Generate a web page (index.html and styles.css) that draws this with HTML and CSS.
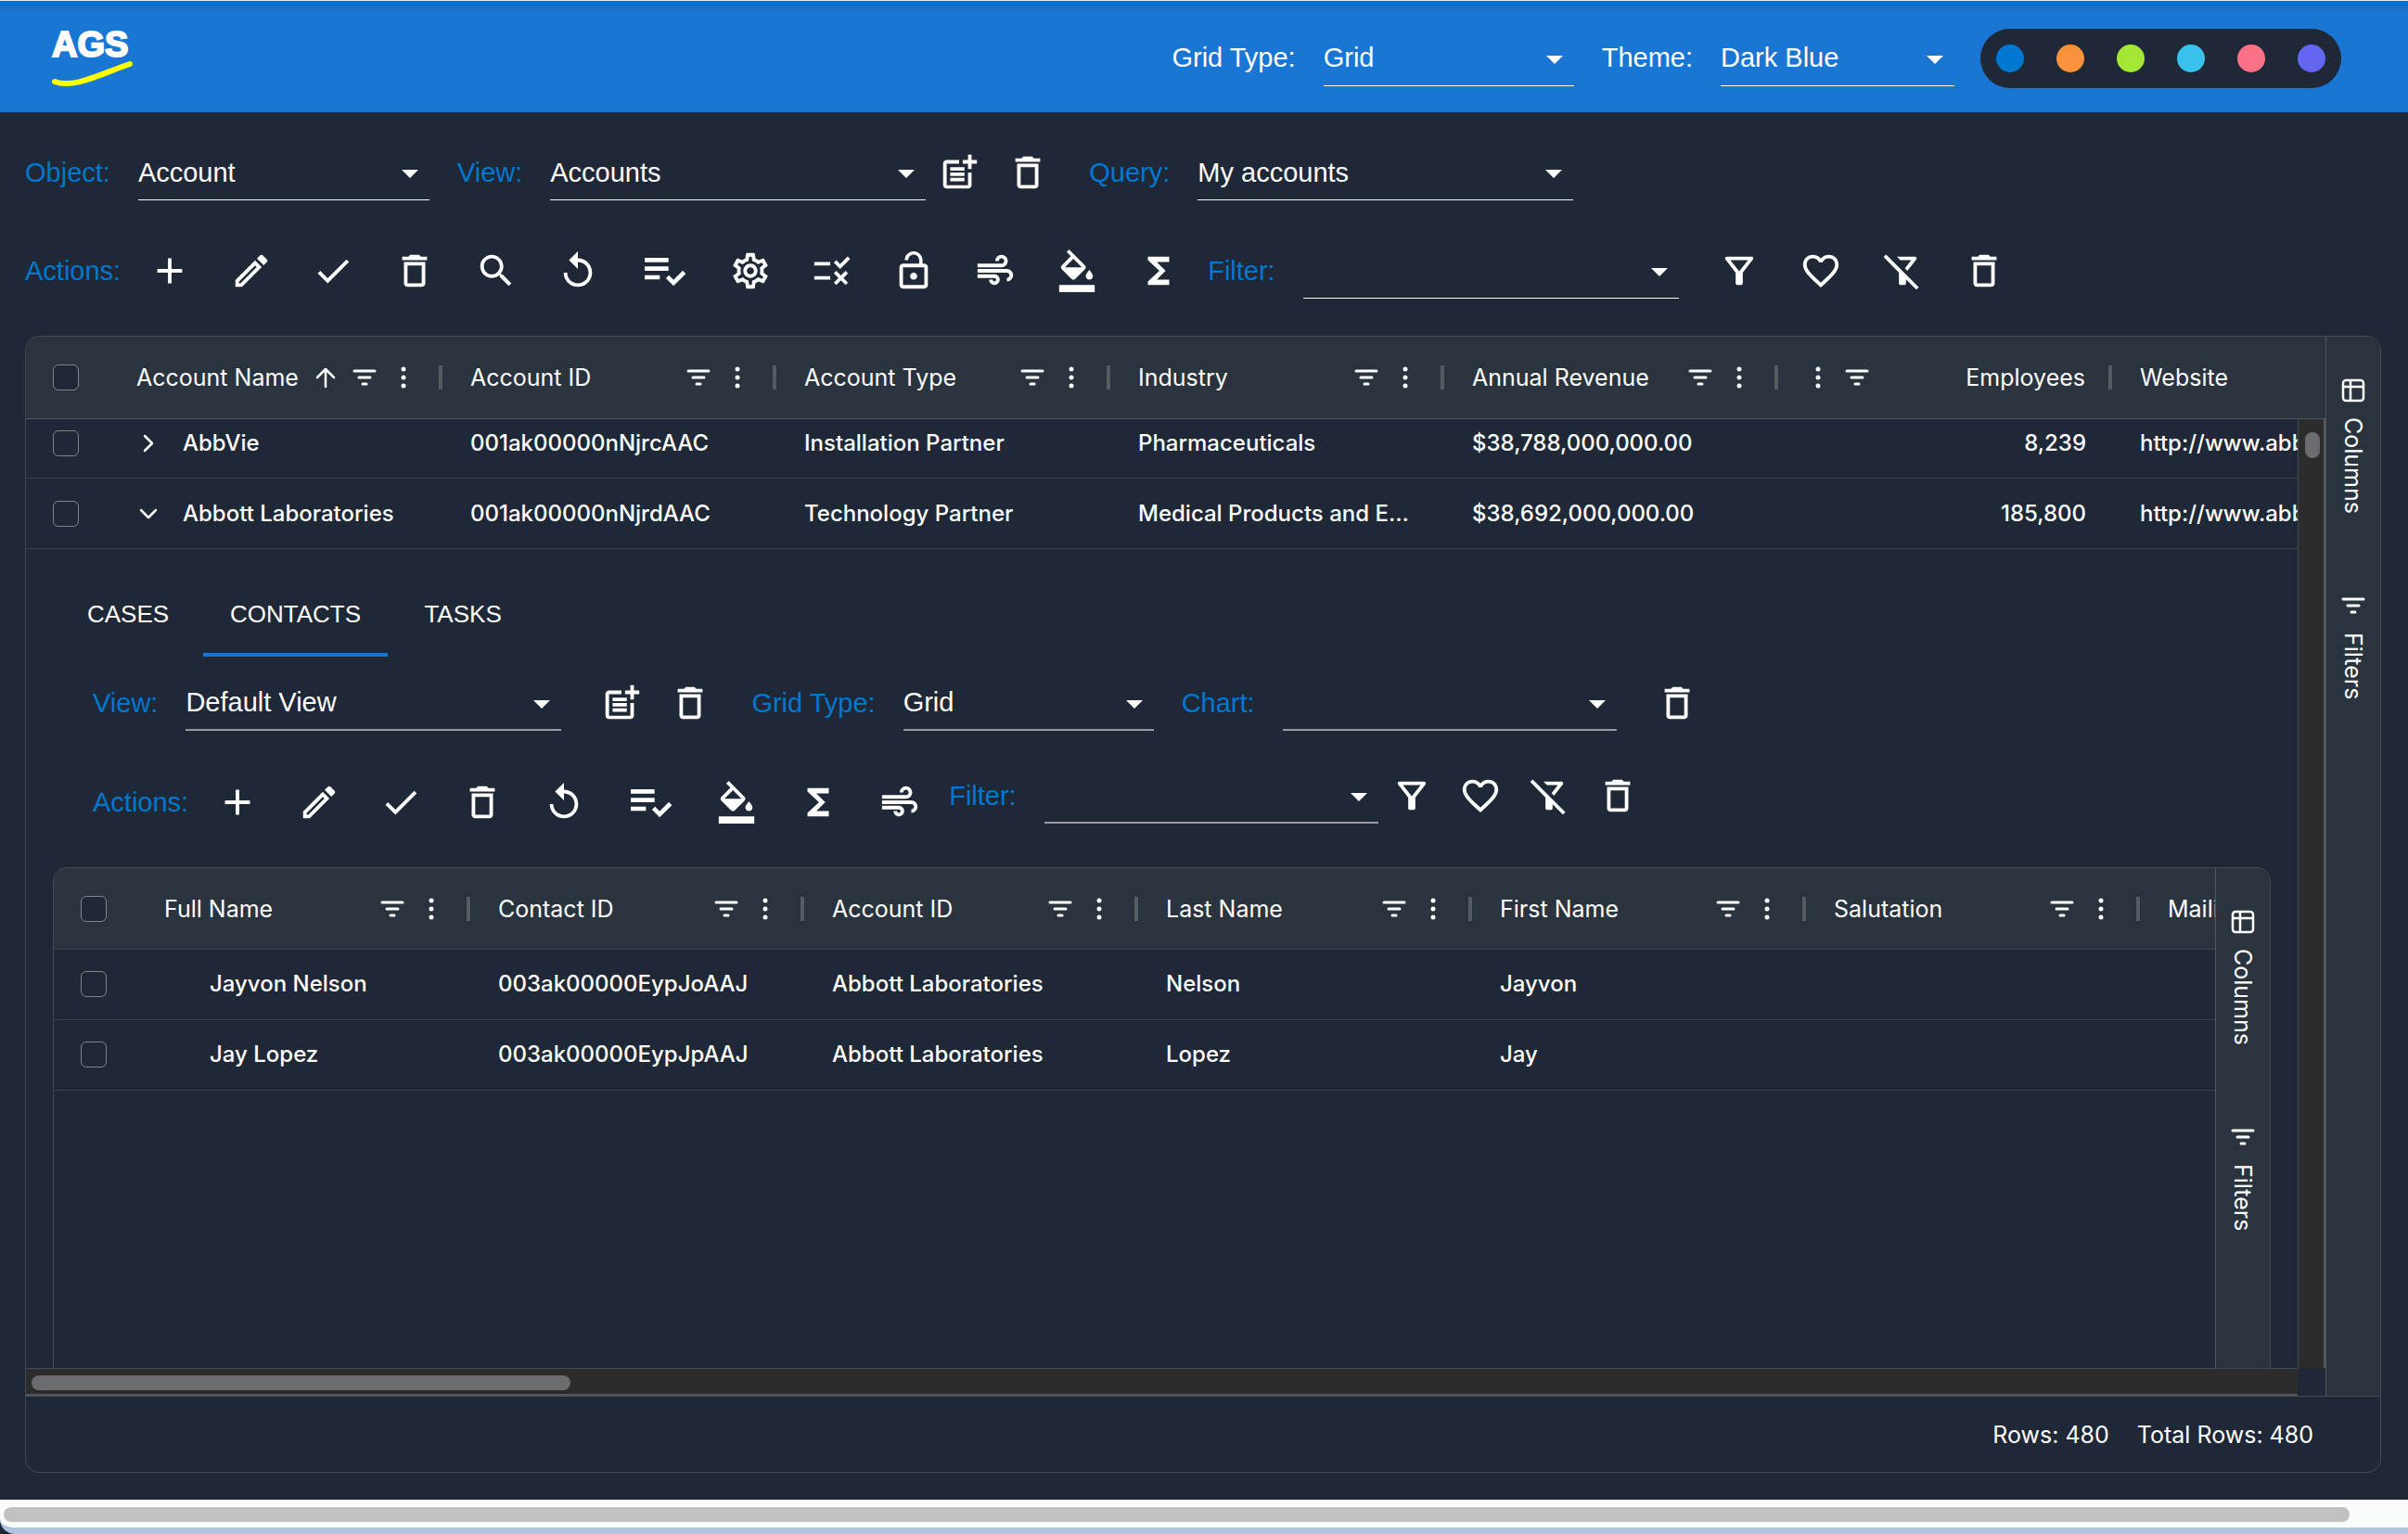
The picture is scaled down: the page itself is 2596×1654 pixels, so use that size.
FILE: index.html
```html
<!DOCTYPE html>
<html lang="en">
  <head>
    <meta charset="UTF-8" />
    <meta name="viewport" content="width=device-width, initial-scale=1.0" />
    <title>AGS - Accounts</title>
    <link rel="stylesheet" href="styles.css">
  </head>
  <body>
    <!-- icon set -->
    <svg class="sprite" aria-hidden="true">
      <symbol id="i-add" viewBox="0 0 24 24"><path d="M19 13h-6v6h-2v-6H5v-2h6V5h2v6h6z"/></symbol>
      <symbol id="i-edit" viewBox="0 0 24 24"><path d="M14.06 9.02l.92.92L5.92 19H5v-.92l9.06-9.06M17.66 3c-.25 0-.51.1-.7.29l-1.83 1.83 3.75 3.75 1.83-1.83c.39-.39.39-1.02 0-1.41l-2.34-2.34c-.2-.2-.45-.29-.71-.29zm-3.6 3.19L3 17.25V21h3.75L17.81 9.94l-3.75-3.75z"/></symbol>
      <symbol id="i-check" viewBox="0 0 24 24"><path d="M9 16.17 4.83 12l-1.42 1.41L9 19 21 7l-1.41-1.41z"/></symbol>
      <symbol id="i-delete" viewBox="0 0 24 24"><path d="M6 19c0 1.1.9 2 2 2h8c1.1 0 2-.9 2-2V7H6v12zM8 9h8v10H8V9zm7.5-5-1-1h-5l-1 1H5v2h14V4z"/></symbol>
      <symbol id="i-search" viewBox="0 0 24 24"><path d="M15.5 14h-.79l-.28-.27C15.41 12.59 16 11.11 16 9.5 16 5.91 13.09 3 9.5 3S3 5.91 3 9.5 5.91 16 9.5 16c1.61 0 3.09-.59 4.23-1.57l.27.28v.79l5 4.99L20.49 19l-4.99-5zm-6 0C7.01 14 5 11.99 5 9.5S7.01 5 9.5 5 14 7.01 14 9.5 11.99 14 9.5 14z"/></symbol>
      <symbol id="i-replay" viewBox="0 0 24 24"><path d="M12 5V1L7 6l5 5V7c3.31 0 6 2.69 6 6s-2.69 6-6 6-6-2.69-6-6H4c0 4.42 3.58 8 8 8s8-3.58 8-8-3.58-8-8-8z"/></symbol>
      <symbol id="i-list" viewBox="0 0 24 24"><path d="M3 10h11v2H3zm0-4h11v2H3zm0 8h7v2H3zm17.59-2.07-4.25 4.24-2.12-2.12-1.41 1.41L16.34 19 22 13.34z"/></symbol>
      <symbol id="i-settings" viewBox="0 0 24 24"><path d="M19.43 12.98c.04-.32.07-.64.07-.98 0-.34-.03-.66-.07-.98l2.11-1.65c.19-.15.24-.42.12-.64l-2-3.46c-.09-.16-.26-.25-.44-.25-.06 0-.12.01-.17.03l-2.49 1c-.52-.4-1.08-.73-1.69-.98l-.38-2.65C14.46 2.18 14.25 2 14 2h-4c-.25 0-.46.18-.49.42l-.38 2.65c-.61.25-1.17.59-1.69.98l-2.49-1c-.06-.02-.12-.03-.18-.03-.17 0-.34.09-.43.25l-2 3.46c-.13.22-.07.49.12.64l2.11 1.65c-.04.32-.07.65-.07.98 0 .33.03.66.07.98l-2.11 1.65c-.19.15-.24.42-.12.64l2 3.46c.09.16.26.25.44.25.06 0 .12-.01.17-.03l2.49-1c.52.4 1.08.73 1.69.98l.38 2.65c.03.24.24.42.49.42h4c.25 0 .46-.18.49-.42l.38-2.65c.61-.25 1.17-.59 1.69-.98l2.49 1c.06.02.12.03.18.03.17 0 .34-.09.43-.25l2-3.46c.12-.22.07-.49-.12-.64l-2.11-1.65zm-1.98-1.71c.04.31.05.52.05.73 0 .21-.02.43-.05.73l-.14 1.13.89.7 1.08.84-.7 1.21-1.27-.51-1.04-.42-.9.68c-.43.32-.84.56-1.25.73l-1.06.43-.16 1.13-.2 1.35h-1.4l-.19-1.35-.16-1.13-1.06-.43c-.43-.18-.83-.41-1.23-.71l-.91-.7-1.06.43-1.27.51-.7-1.21 1.08-.84.89-.7-.14-1.13c-.03-.31-.05-.54-.05-.74s.02-.43.05-.73l.14-1.13-.89-.7-1.08-.84.7-1.21 1.27.51 1.04.42.9-.68c.43-.32.84-.56 1.25-.73l1.06-.43.16-1.13.2-1.35h1.39l.19 1.35.16 1.13 1.06.43c.43.18.83.41 1.23.71l.91.7 1.06-.43 1.27-.51.7 1.21-1.07.85-.89.7.14 1.13zM12 8c-2.21 0-4 1.79-4 4s1.79 4 4 4 4-1.79 4-4-1.79-4-4-4zm0 6c-1.1 0-2-.9-2-2s.9-2 2-2 2 .9 2 2-.9 2-2 2z"/></symbol>
      <symbol id="i-rule" viewBox="0 0 24 24"><path d="M16.54 11 13 7.46l1.41-1.41 2.12 2.12 4.24-4.24 1.41 1.41L16.54 11zM11 7H2v2h9V7zm10 6.41L19.59 12 17 14.59 14.41 12 13 13.41 15.59 16 13 18.59 14.41 20 17 17.41 19.59 20 21 18.59 18.41 16 21 13.41zM11 15H2v2h9v-2z"/></symbol>
      <symbol id="i-lock" viewBox="0 0 24 24"><path d="M12 17c1.1 0 2-.9 2-2s-.9-2-2-2-2 .9-2 2 .9 2 2 2zm6-9h-1V6c0-2.76-2.24-5-5-5S7 3.24 7 6h1.9c0-1.71 1.39-3.1 3.1-3.1 1.71 0 3.1 1.39 3.1 3.1v2H6c-1.1 0-2 .9-2 2v10c0 1.1.9 2 2 2h12c1.1 0 2-.9 2-2V10c0-1.1-.9-2-2-2zm0 12H6V10h12v10z"/></symbol>
      <symbol id="i-air" viewBox="0 0 24 24"><path d="M14.5 17c0 1.65-1.35 3-3 3s-3-1.35-3-3h2c0 .55.45 1 1 1s1-.45 1-1-.45-1-1-1H2v-2h9.5c1.65 0 3 1.35 3 3zM19 6.5C19 4.57 17.43 3 15.5 3S12 4.57 12 6.5h2c0-.83.67-1.5 1.5-1.5s1.5.67 1.5 1.5S16.33 8 15.5 8H2v2h13.5c1.93 0 3.5-1.57 3.5-3.5zm-.5 4.5H2v2h16.5c.83 0 1.5.67 1.5 1.5s-.67 1.5-1.5 1.5v2c1.93 0 3.5-1.57 3.5-3.5S20.43 11 18.5 11z"/></symbol>
      <symbol id="i-fill" viewBox="0 0 24 24"><path d="M16.56 8.94 7.62 0 6.21 1.41l2.38 2.38-5.15 5.15c-.59.59-.59 1.54 0 2.12l5.5 5.5c.29.29.68.44 1.06.44s.77-.15 1.06-.44l5.5-5.5c.59-.58.59-1.53 0-2.12zM5.21 10 10 5.21 14.79 10H5.21zM19 11.5s-2 2.17-2 3.5c0 1.1.9 2 2 2s2-.9 2-2c0-1.33-2-3.5-2-3.5zM2 20h20v4H2v-4z"/></symbol>
      <symbol id="i-sum" viewBox="0 0 24 24"><path d="M18 4H6v2l6.5 6L6 18v2h12v-3h-7l5-5-5-5h7z"/></symbol>
      <symbol id="i-postadd" viewBox="0 0 24 24"><path d="M17 19.22H5V7h7V5H5c-1.1 0-2 .9-2 2v12c0 1.1.9 2 2 2h12c1.1 0 2-.9 2-2v-7h-2v7.22z"/><path d="M19 2h-2v3h-3v2h3v2.99h2V7h3V5h-3V2zM7 9h8v2H7zM7 12h8v2H7zM7 15h8v2H7z"/></symbol>
      <symbol id="i-funnel" viewBox="0 0 24 24"><path d="M7 6h10l-5.01 6.3L7 6zm-2.75-.39C6.27 8.2 10 13 10 13v6c0 .55.45 1 1 1h2c.55 0 1-.45 1-1v-6s3.72-4.8 5.74-7.39c.51-.66.04-1.61-.79-1.61H5.04c-.83 0-1.3.95-.79 1.61z"/></symbol>
      <symbol id="i-heart" viewBox="0 0 24 24"><path d="M16.5 3c-1.74 0-3.41.81-4.5 2.09C10.91 3.81 9.24 3 7.5 3 4.42 3 2 5.42 2 8.5c0 3.78 3.4 6.86 8.55 11.54L12 21.35l1.45-1.32C18.6 15.36 22 12.28 22 8.5 22 5.42 19.58 3 16.5 3zm-4.4 15.55-.1.1-.1-.1C7.14 14.24 4 11.39 4 8.5 4 6.5 5.5 5 7.5 5c1.54 0 3.04.99 3.57 2.36h1.87C13.46 5.99 14.96 5 16.5 5c2 0 3.5 1.5 3.5 3.5 0 2.89-3.14 5.74-7.9 10.05z"/></symbol>
      <symbol id="i-funnel-off" viewBox="0 0 24 24"><path d="m16.95 6-3.57 4.55 1.43 1.43c1.03-1.31 4.98-6.37 4.98-6.37.51-.66.04-1.61-.79-1.61H8.83l2 2h6.12zM2.81 2.81 1.39 4.22 10 13v6c0 .55.45 1 1 1h2c.55 0 1-.45 1-1v-2.17l5.78 5.78 1.41-1.41L2.81 2.81z"/></symbol>
      <symbol id="g-filter" viewBox="0 0 26 26"><path class="line" d="M2 6h22M7 13h12M11 20h4"/></symbol>
      <symbol id="g-menu" viewBox="0 0 26 26"><circle cx="13" cy="4" r="2.5"/><circle cx="13" cy="13" r="2.5"/><circle cx="13" cy="22" r="2.5"/></symbol>
      <symbol id="g-asc" viewBox="0 0 26 26"><path class="line thin" d="M13 23V4M4 13l9-9 9 9"/></symbol>
      <symbol id="g-right" viewBox="0 0 26 26"><path class="line thin" d="M9 5l8 8-8 8"/></symbol>
      <symbol id="g-down" viewBox="0 0 26 26"><path class="line thin" d="M5 9l8 8 8-8"/></symbol>
      <symbol id="g-columns" viewBox="0 0 26 26"><path class="line thin" d="M5 2h16a3 3 0 0 1 3 3v16a3 3 0 0 1-3 3H5a3 3 0 0 1-3-3V5a3 3 0 0 1 3-3zM2 9h22M10 2v22"/></symbol>
    </svg>

    <header class="app-header">
      <div class="logo">
        <span>AGS</span>
        <svg width="88" height="30" viewBox="0 0 88 30"><path d="M3 23C24 31 54 14 84 4" fill="none" stroke="#ff0" stroke-width="6" stroke-linecap="round"/></svg>
      </div>
      <div class="header-tools">
        <label for="gridType">Grid Type:</label>
        <div class="select w-type"><select id="gridType"><option>Grid</option><option>Chart</option></select></div>
        <label for="theme">Theme:</label>
        <div class="select w-theme"><select id="theme"><option>Dark Blue</option><option>Light</option></select></div>
        <div class="swatches">
          <button class="swatch blue" aria-label="Blue"></button>
          <button class="swatch orange" aria-label="Orange"></button>
          <button class="swatch lime" aria-label="Lime"></button>
          <button class="swatch sky" aria-label="Sky"></button>
          <button class="swatch rose" aria-label="Rose"></button>
          <button class="swatch indigo" aria-label="Indigo"></button>
        </div>
      </div>
    </header>

    <main>
      <div class="toolbar">
        <label for="object">Object:</label>
        <div class="select w-object"><select id="object"><option>Account</option></select></div>
        <label for="view">View:</label>
        <div class="select w-view"><select id="view"><option>Accounts</option></select></div>
        <div class="icons near">
          <button class="icon" aria-label="New view"><svg><use href="#i-postadd"/></svg></button>
          <button class="icon" aria-label="Delete view"><svg><use href="#i-delete"/></svg></button>
        </div>
        <label for="query">Query:</label>
        <div class="select w-view"><select id="query"><option>My accounts</option></select></div>
      </div>

      <div class="toolbar">
        <span class="label">Actions:</span>
        <div class="icons wide">
          <button class="icon" aria-label="Add"><svg><use href="#i-add"/></svg></button>
          <button class="icon" aria-label="Edit"><svg><use href="#i-edit"/></svg></button>
          <button class="icon" aria-label="Save"><svg><use href="#i-check"/></svg></button>
          <button class="icon" aria-label="Delete"><svg><use href="#i-delete"/></svg></button>
          <button class="icon" aria-label="Search"><svg><use href="#i-search"/></svg></button>
          <button class="icon" aria-label="Reload"><svg><use href="#i-replay"/></svg></button>
          <button class="icon large" aria-label="Select rows"><svg><use href="#i-list"/></svg></button>
          <button class="icon" aria-label="Settings"><svg><use href="#i-settings"/></svg></button>
          <button class="icon" aria-label="Rules"><svg><use href="#i-rule"/></svg></button>
          <button class="icon" aria-label="Unlock"><svg><use href="#i-lock"/></svg></button>
          <button class="icon" aria-label="Flow"><svg><use href="#i-air"/></svg></button>
          <button class="icon" aria-label="Fill colour"><svg><use href="#i-fill"/></svg></button>
          <button class="icon" aria-label="Totals"><svg><use href="#i-sum"/></svg></button>
        </div>
        <label for="filter">Filter:</label>
        <div class="select w-view"><select id="filter"><option></option></select></div>
        <div class="icons wide far">
          <button class="icon" aria-label="Apply filter"><svg><use href="#i-funnel"/></svg></button>
          <button class="icon" aria-label="Favourite"><svg><use href="#i-heart"/></svg></button>
          <button class="icon" aria-label="Clear filter"><svg><use href="#i-funnel-off"/></svg></button>
          <button class="icon" aria-label="Delete filter"><svg><use href="#i-delete"/></svg></button>
        </div>
      </div>

      <section class="grid main-grid">
        <div class="grid-top">
          <div class="grid-center">
            <table class="grid-head">
              <colgroup><col class="c-check"><col class="c"><col class="c"><col class="c"><col class="c"><col class="c"><col class="c"><col></colgroup>
              <thead>
                <tr>
                  <th><input type="checkbox" aria-label="Select all"></th>
                  <th><div class="th"><span>Account Name</span><svg><use href="#g-asc"/></svg><svg><use href="#g-filter"/></svg><svg><use href="#g-menu"/></svg><i></i></div></th>
                  <th><div class="th"><span>Account ID</span><svg><use href="#g-filter"/></svg><svg><use href="#g-menu"/></svg><i></i></div></th>
                  <th><div class="th"><span>Account Type</span><svg><use href="#g-filter"/></svg><svg><use href="#g-menu"/></svg><i></i></div></th>
                  <th><div class="th"><span>Industry</span><svg><use href="#g-filter"/></svg><svg><use href="#g-menu"/></svg><i></i></div></th>
                  <th><div class="th"><span>Annual Revenue</span><svg><use href="#g-filter"/></svg><svg><use href="#g-menu"/></svg><i></i></div></th>
                  <th><div class="th num"><svg><use href="#g-menu"/></svg><svg><use href="#g-filter"/></svg><span>Employees</span><i></i></div></th>
                  <th><div class="th"><span>Website</span></div></th>
                </tr>
              </thead>
            </table>
            <div class="grid-body">
              <div class="rows">
                <table>
                  <colgroup><col class="c-check"><col class="c"><col class="c"><col class="c"><col class="c"><col class="c"><col class="c"><col></colgroup>
                  <tbody>
                    <tr class="scrolled">
                      <td><input type="checkbox" aria-label="Select AbbVie"></td>
                      <td><div class="group"><button aria-label="Expand"><svg><use href="#g-right"/></svg></button>AbbVie</div></td>
                      <td>001ak00000nNjrcAAC</td>
                      <td>Installation Partner</td>
                      <td>Pharmaceuticals</td>
                      <td>$38,788,000,000.00</td>
                      <td class="num">8,239</td>
                      <td class="clip">http://www.abbvie.com</td>
                    </tr>
                    <tr>
                      <td><input type="checkbox" aria-label="Select Abbott Laboratories"></td>
                      <td><div class="group"><button aria-label="Collapse"><svg><use href="#g-down"/></svg></button>Abbott Laboratories</div></td>
                      <td>001ak00000nNjrdAAC</td>
                      <td>Technology Partner</td>
                      <td>Medical Products and Equipment</td>
                      <td>$38,692,000,000.00</td>
                      <td class="num">185,800</td>
                      <td class="clip">http://www.abbott.com</td>
                    </tr>
                  </tbody>
                </table>

                <div class="detail">
                  <div class="tabs" role="tablist">
                    <button role="tab">CASES</button>
                    <button role="tab" class="active" aria-selected="true">CONTACTS</button>
                    <button role="tab">TASKS</button>
                  </div>

                  <div class="toolbar">
                    <label for="subView">View:</label>
                    <div class="select w-view"><select id="subView"><option>Default View</option></select></div>
                    <div class="icons near far">
                      <button class="icon" aria-label="New view"><svg><use href="#i-postadd"/></svg></button>
                      <button class="icon" aria-label="Delete view"><svg><use href="#i-delete"/></svg></button>
                    </div>
                    <label for="subType">Grid Type:</label>
                    <div class="select w-type"><select id="subType"><option>Grid</option></select></div>
                    <label for="chart">Chart:</label>
                    <div class="select w-chart"><select id="chart"><option></option></select></div>
                    <div class="icons far">
                      <button class="icon" aria-label="Delete chart"><svg><use href="#i-delete"/></svg></button>
                    </div>
                  </div>

                  <div class="toolbar top">
                    <div class="actions">
                      <span class="label">Actions:</span>
                      <div class="icons wide">
                        <button class="icon" aria-label="Add"><svg><use href="#i-add"/></svg></button>
                        <button class="icon" aria-label="Edit"><svg><use href="#i-edit"/></svg></button>
                        <button class="icon" aria-label="Save"><svg><use href="#i-check"/></svg></button>
                        <button class="icon" aria-label="Delete"><svg><use href="#i-delete"/></svg></button>
                        <button class="icon" aria-label="Reload"><svg><use href="#i-replay"/></svg></button>
                        <button class="icon large" aria-label="Select rows"><svg><use href="#i-list"/></svg></button>
                        <button class="icon" aria-label="Fill colour"><svg><use href="#i-fill"/></svg></button>
                        <button class="icon" aria-label="Totals"><svg><use href="#i-sum"/></svg></button>
                        <button class="icon" aria-label="Flow"><svg><use href="#i-air"/></svg></button>
                      </div>
                    </div>
                    <div class="filters">
                      <label for="subFilter">Filter:</label>
                      <div class="select w-chart"><select id="subFilter"><option></option></select></div>
                      <div class="icons near">
                        <button class="icon" aria-label="Apply filter"><svg><use href="#i-funnel"/></svg></button>
                        <button class="icon" aria-label="Favourite"><svg><use href="#i-heart"/></svg></button>
                        <button class="icon" aria-label="Clear filter"><svg><use href="#i-funnel-off"/></svg></button>
                        <button class="icon" aria-label="Delete filter"><svg><use href="#i-delete"/></svg></button>
                      </div>
                    </div>
                  </div>

                  <section class="grid sub-grid">
                    <div class="grid-center">
                      <table class="grid-head">
                        <colgroup><col class="c-check"><col class="c"><col class="c"><col class="c"><col class="c"><col class="c"><col class="c"><col></colgroup>
                        <thead>
                          <tr>
                            <th><input type="checkbox" aria-label="Select all contacts"></th>
                            <th><div class="th"><span>Full Name</span><svg><use href="#g-filter"/></svg><svg><use href="#g-menu"/></svg><i></i></div></th>
                            <th><div class="th"><span>Contact ID</span><svg><use href="#g-filter"/></svg><svg><use href="#g-menu"/></svg><i></i></div></th>
                            <th><div class="th"><span>Account ID</span><svg><use href="#g-filter"/></svg><svg><use href="#g-menu"/></svg><i></i></div></th>
                            <th><div class="th"><span>Last Name</span><svg><use href="#g-filter"/></svg><svg><use href="#g-menu"/></svg><i></i></div></th>
                            <th><div class="th"><span>First Name</span><svg><use href="#g-filter"/></svg><svg><use href="#g-menu"/></svg><i></i></div></th>
                            <th><div class="th"><span>Salutation</span><svg><use href="#g-filter"/></svg><svg><use href="#g-menu"/></svg><i></i></div></th>
                            <th><div class="th"><span>Mailing Street</span></div></th>
                          </tr>
                        </thead>
                        <tbody>
                          <tr>
                            <td><input type="checkbox" aria-label="Select Jayvon Nelson"></td>
                            <td class="indent">Jayvon Nelson</td>
                            <td>003ak00000EypJoAAJ</td>
                            <td>Abbott Laboratories</td>
                            <td>Nelson</td>
                            <td>Jayvon</td>
                            <td></td>
                            <td></td>
                          </tr>
                          <tr>
                            <td><input type="checkbox" aria-label="Select Jay Lopez"></td>
                            <td class="indent">Jay Lopez</td>
                            <td>003ak00000EypJpAAJ</td>
                            <td>Abbott Laboratories</td>
                            <td>Lopez</td>
                            <td>Jay</td>
                            <td></td>
                            <td></td>
                          </tr>
                        </tbody>
                      </table>
                    </div>
                    <aside class="side">
                      <button><svg><use href="#g-columns"/></svg>Columns</button>
                      <button><svg><use href="#g-filter"/></svg>Filters</button>
                    </aside>
                  </section>
                </div>
              </div>
              <div class="v-scroll"><div class="thumb"></div></div>
              <div class="h-scroll"><div class="thumb"></div></div>
            </div>
          </div>
          <aside class="side">
            <button><svg><use href="#g-columns"/></svg>Columns</button>
            <button><svg><use href="#g-filter"/></svg>Filters</button>
          </aside>
        </div>
        <div class="status">
          <span>Rows: 480</span>
          <span>Total Rows: 480</span>
        </div>
      </section>
    </main>

    <div class="page-scroll"><div class="thumb"></div></div>
  </body>
</html>
```

FILE: styles.css
```css
* {
  box-sizing: border-box;
}

body {
  margin: 0;
  height: 100vh;
  display: flex;
  flex-direction: column;
  overflow: hidden;
  background-color: #1f2836;
  color: #fff;
  font-family: "Liberation Sans", Arial, sans-serif;
  font-size: 29px;
}

button,
select {
  font: inherit;
  color: inherit;
  background: none;
  border: none;
  padding: 0;
  margin: 0;
  cursor: pointer;
}

svg {
  display: block;
  fill: currentColor;
}

.sprite {
  position: absolute;
  width: 0;
  height: 0;
}

.line {
  fill: none;
  stroke: currentColor;
  stroke-width: 3;
  stroke-linecap: round;
  stroke-linejoin: round;
}

.thin {
  stroke-width: 2.5;
}

/* header */

.app-header {
  flex: none;
  display: flex;
  align-items: center;
  justify-content: space-between;
  height: 121px;
  padding: 4px 72px 0 56px;
  background: linear-gradient(#e3edf5 1px, #0072d2 1px, #0072d2 6px, #1a70c4 6px, #1976d2 15px);
}

.logo span {
  display: block;
  font-size: 38px;
  line-height: 34px;
  font-weight: bold;
  -webkit-text-stroke: 2px #fff;
}

.header-tools,
.toolbar,
.actions,
.filters,
.icons {
  display: flex;
  align-items: center;
}

label,
.label {
  margin: 0 30px;
  white-space: nowrap;
}

.toolbar label,
.label {
  color: #0078d0;
}

.toolbar > label:first-child,
.label:first-child {
  margin-left: 0;
}

/* drop-downs */

.select {
  position: relative;
  height: 60px;
}

.select::after {
  content: "";
  position: absolute;
  right: 12px;
  top: 27px;
  border: 9px solid transparent;
  border-top-color: #fff;
  border-bottom: none;
  pointer-events: none;
}

.select select {
  appearance: none;
  width: 100%;
  height: 100%;
  border-bottom: 1px solid #fff;
  border-radius: 0;
  outline: none;
}

.w-type { width: 270px; }
.w-theme { width: 252px; }
.w-object { width: 314px; }
.w-view { width: 405px; }
.w-chart { width: 360px; }

.swatches {
  display: flex;
  gap: 35px;
  margin-left: 28px;
  padding: 17px;
  border-radius: 33px;
  background-color: #1f2836;
}

.swatch {
  width: 30px;
  height: 30px;
  border-radius: 50%;
}

.blue { background-color: #0078d0; }
.orange { background-color: #fb923c; }
.lime { background-color: #a3e635; }
.sky { background-color: #38c2ec; }
.rose { background-color: #fb7185; }
.indigo { background-color: #6366f1; }

/* toolbars */

main {
  flex: 1;
  min-height: 0;
  display: flex;
  flex-direction: column;
  padding: 35px 29px 29px 27px;
}

main > .toolbar {
  margin-bottom: 46px;
}

main > .toolbar + .toolbar {
  margin-bottom: 40px;
}

.icon svg {
  width: 46px;
  height: 46px;
}

.icon.large svg {
  width: 56px;
  height: 56px;
}

.icons.wide {
  gap: 42px;
}

.icons.near {
  gap: 28px;
  margin: 0 13px;
}

.icons.far {
  margin-left: 42px;
}

/* grids */

.grid {
  border: 1px solid #424a52;
  border-radius: 15px;
  overflow: hidden;
  font-family: Inter, "Liberation Sans", sans-serif;
  font-size: 25px;
}

.main-grid {
  flex: 1;
  min-height: 0;
  display: flex;
  flex-direction: column;
}

.grid-top {
  flex: 1;
  min-height: 0;
  display: flex;
}

.grid-center {
  flex: 1;
  min-width: 0;
  display: flex;
  flex-direction: column;
  overflow: hidden;
}

table {
  width: 100%;
  table-layout: fixed;
  border-collapse: separate;
  border-spacing: 0;
}

.c-check { width: 89px; }
.c { width: 360px; }

th {
  height: 89px;
  padding: 0;
  text-align: left;
  font-weight: 400;
  background-color: #2a343f;
  border-bottom: 1px solid #50565c;
}

td {
  height: 76px;
  padding: 0 28px 0 30px;
  border-bottom: 1px solid #3b444d;
  overflow: hidden;
  white-space: nowrap;
  text-overflow: ellipsis;
  font-size: 24px;
  font-weight: 500;
}

/* first row is partly scrolled under the header */
.scrolled td {
  height: 64px;
  padding-bottom: 12px;
}

th:first-child,
td:first-child {
  padding-left: 29px;
  padding-right: 0;
}

td.indent {
  padding-left: 79px;
}

td.clip {
  padding-right: 0;
  text-overflow: clip;
}

td.num {
  text-align: right;
}

input[type="checkbox"] {
  appearance: none;
  display: block;
  width: 28px;
  height: 28px;
  margin: 0;
  border: 1px solid #80858b;
  border-radius: 6px;
  background-color: #1f2836;
}

.th {
  display: flex;
  align-items: center;
  gap: 16px;
  padding-left: 30px;
  white-space: nowrap;
  overflow: hidden;
}

.th span {
  flex: 1;
}

.th.num span {
  text-align: right;
}

.th svg,
.group svg,
.side svg {
  flex: none;
  width: 26px;
  height: 26px;
}

.th i {
  flex: none;
  width: 4px;
  height: 26px;
  margin-left: 9px;
  background-color: #555b61;
}

.group {
  display: flex;
  align-items: center;
  gap: 24px;
}

.grid-body {
  flex: 1;
  min-height: 0;
  display: grid;
  grid-template-columns: minmax(0, 1fr) 30px;
  grid-template-rows: minmax(0, 1fr) 30px;
}

.rows {
  display: flex;
  flex-direction: column;
  overflow: hidden;
}

/* scroll bars */

.v-scroll {
  padding: 14px 4px 0 7px;
  border-left: 1px solid #424a52;
  border-right: 2px solid #55595d;
  background-color: #2c2c2c;
}

.v-scroll .thumb {
  height: 28px;
  border-radius: 8px;
  background-color: #6b6c6f;
}

.h-scroll {
  padding: 7px 6px 0;
  border-top: 1px solid #424a52;
  border-bottom: 2px solid #55595d;
  background-color: #2c2c2c;
}

.h-scroll .thumb {
  width: 581px;
  height: 16px;
  border-radius: 8px;
  background-color: #6b6c6f;
}

.page-scroll {
  flex: none;
  height: 37px;
  padding: 8px 63px 0 4px;
  background-color: #fbfcfc;
  border-bottom: 7px solid #b0c4de;
  border-bottom-left-radius: 16px;
}

.page-scroll .thumb {
  height: 16px;
  border-radius: 8px;
  background-color: #c1c1c1;
}

/* side bar */

.side {
  flex: none;
  width: 59px;
  border-left: 1px solid #50565c;
  background-color: #2a343f;
}

.side button {
  display: flex;
  align-items: center;
  gap: 16px;
  width: 58px;
  padding: 45px 0 41px;
  writing-mode: vertical-rl;
}

.status {
  flex: none;
  display: flex;
  align-items: center;
  justify-content: flex-end;
  gap: 30px;
  height: 82px;
  padding-right: 72px;
  border-top: 1px solid #424a52;
}

/* detail panel */

.detail {
  flex: 1;
  min-height: 0;
  display: flex;
  flex-direction: column;
  padding: 36px 29px 0;
  font-family: "Liberation Sans", Arial, sans-serif;
  font-size: 29px;
}

.tabs {
  display: flex;
  margin-bottom: 20px;
  font-size: 26px;
}

.tabs button {
  min-width: 162px;
  height: 80px;
  padding: 0 29px 8px;
  border-bottom: 4px solid transparent;
}

.tabs .active {
  border-bottom-color: #1976d2;
}

.detail .toolbar {
  flex: none;
  padding-left: 43px;
  margin-bottom: 40px;
}

.detail .toolbar.top {
  align-items: flex-start;
  margin-bottom: 33px;
}

.detail select {
  border-bottom: 2px solid #9a9da1;
}

.actions {
  height: 74px;
}

.sub-grid {
  flex: 1;
  min-height: 0;
  display: flex;
  border-bottom: none;
  border-radius: 15px 15px 0 0;
}

.sub-grid th {
  height: 88px;
  border-bottom-color: #3b444d;
}

.sub-grid td {
  padding-bottom: 2px;
}
```
